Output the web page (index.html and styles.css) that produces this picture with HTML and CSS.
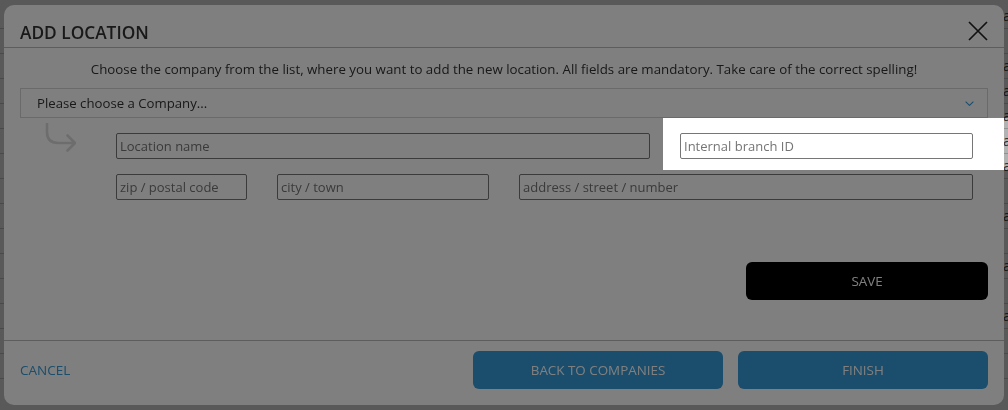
FILE: index.html
```html
<!DOCTYPE html>
<html lang="en">
<head>
<meta charset="utf-8">
<title>Add location</title>
<link rel="stylesheet" href="styles.css">
</head>
<body>
<div class="page">
  <div class="prow"><span class="pcell">a</span><span class="pval">add</span></div>
  <div class="prow"><span class="pcell">b</span><span class="pval">&nbsp;</span></div>
  <div class="prow"><span class="pcell">c</span><span class="pval">add</span></div>
  <div class="prow"><span class="pcell">d</span><span class="pval">add</span></div>
  <div class="prow"><span class="pcell">e</span><span class="pval">add</span></div>
  <div class="prow"><span class="pcell">f</span><span class="pval">add</span></div>
  <div class="prow"><span class="pcell">g</span><span class="pval">add</span></div>
  <div class="prow"><span class="pcell">h</span><span class="pval">&nbsp;</span></div>
  <div class="prow"><span class="pcell">i</span><span class="pval">add</span></div>
  <div class="prow"><span class="pcell">j</span><span class="pval">&nbsp;</span></div>
  <div class="prow"><span class="pcell">k</span><span class="pval">add</span></div>
  <div class="prow"><span class="pcell">l</span><span class="pval">&nbsp;</span></div>
  <div class="prow"><span class="pcell">m</span><span class="pval">add</span></div>
  <div class="prow"><span class="pcell">n</span><span class="pval">&nbsp;</span></div>
  <div class="prow last"><span class="pcell">o</span><span class="pval">&nbsp;</span></div>
  <p class="pnote">location.</p>
</div>

<div class="backdrop"></div>

<div class="modal" role="dialog" aria-labelledby="dlg-title">
  <div class="modal-header">
    <h2 class="title" id="dlg-title">ADD LOCATION</h2>
    <button class="close" aria-label="Close">
      <svg viewBox="0 0 20 20" width="20" height="20"><path d="M1 1 L19 19 M19 1 L1 19" stroke="#222" stroke-width="1.7" fill="none"/></svg>
    </button>
  </div>
  <div class="modal-body">
    <p class="intro">Choose the company from the list, where you want to add the new location. All fields are mandatory. Take care of the correct spelling!</p>
    <div class="select">
      <span>Please choose a Company...</span>
      <svg class="chev" viewBox="0 0 9 5" width="9" height="5"><polyline points="0.6,0.6 4.5,4.4 8.4,0.6" fill="none" stroke="#369ad8" stroke-width="1.1"/></svg>
    </div>
    <div class="fields">
      <svg class="hint-arrow" viewBox="0 0 32 30" width="32" height="30"><path d="M3 0 V9 Q3 20 14 20 H30 M23.5 12.5 L31 20 L23.5 27.5" fill="none" stroke="#dadada" stroke-width="2.6" stroke-linecap="round" stroke-linejoin="round"/></svg>
      <div class="grid">
        <div class="frow">
          <input class="w-name" type="text" placeholder="Location name">
          <input class="w-branch" type="text" placeholder="Internal branch ID">
        </div>
        <div class="frow">
          <input class="w-zip" type="text" placeholder="zip / postal code">
          <input class="w-city" type="text" placeholder="city / town">
          <input class="w-addr" type="text" placeholder="address / street / number">
        </div>
      </div>
    </div>
    <div class="actions">
      <button class="save">SAVE</button>
    </div>
  </div>
  <div class="modal-footer">
    <a class="cancel" href="#">CANCEL</a>
    <div class="footer-buttons">
      <button class="btn-primary">BACK TO COMPANIES</button>
      <button class="btn-primary">FINISH</button>
    </div>
  </div>
</div>

<div class="tour-spot"></div>
</body>
</html>
```

FILE: styles.css
```css
html, body {
  margin: 0;
  width: 1008px;
  height: 410px;
  overflow: hidden;
}

body {
  font-family: "Open Sans", "Noto Sans", sans-serif;
  background: #fff;
  color: #333;
}

/* background page */
.page {
  padding-top: 4px;
}

.prow {
  display: flex;
  height: 25px;
  box-sizing: border-box;
  border-bottom: 1px solid #d0d0d0;
  font-size: 14px;
  line-height: 24px;
}

.pcell {
  width: 1003px;
  flex: none;
  color: transparent;
}

.pval {
  color: #444;
  white-space: nowrap;
}

.pnote {
  margin: 0;
  padding-left: 922px;
  font-size: 15px;
  line-height: 20px;
  color: #111;
}

.backdrop {
  position: fixed;
  inset: 0;
  background: rgba(0, 0, 0, 0.3);
}

/* modal */
.modal {
  position: fixed;
  left: 4px;
  top: 5px;
  width: 1000px;
  height: 400px;
  background: #fff;
  border-radius: 10px;
  display: flex;
  flex-direction: column;
  overflow: hidden;
}

.modal-header {
  height: 43px;
  box-sizing: border-box;
  border-bottom: 1px solid #bbb;
  padding: 16px 16px 0;
  display: flex;
  justify-content: space-between;
  align-items: flex-start;
}

.title {
  margin: 0;
  font-size: 17.3px;
  font-weight: 600;
  line-height: 24px;
  color: #333;
}

.close {
  width: 20px;
  height: 20px;
  padding: 0;
  border: 0;
  background: none;
  display: block;
}

.close svg {
  display: block;
}

.modal-body {
  flex: 1;
  padding: 11px 16px 0;
  display: flex;
  flex-direction: column;
}

.intro {
  margin: 0;
  text-align: center;
  font-size: 13.3px;
  line-height: 20px;
  color: #333;
}

.select {
  margin-top: 9px;
  height: 30px;
  box-sizing: border-box;
  border: 1px solid #d4d4d4;
  display: flex;
  align-items: center;
  justify-content: space-between;
  padding: 0 13px 0 16px;
  font-size: 13.2px;
  color: #333;
}

.chev {
  display: block;
}

.fields {
  display: flex;
  margin-top: 5px;
}

.hint-arrow {
  flex: none;
  margin-left: 24px;
}

.grid {
  margin-left: 40px;
  margin-top: 10px;
  width: 857px;
  display: flex;
  flex-direction: column;
  gap: 15px;
}

.frow {
  display: flex;
  gap: 30px;
}

input {
  height: 26px;
  box-sizing: border-box;
  border: 1px solid #767676;
  border-radius: 2px;
  padding: 0 3px;
  margin: 0;
  font-family: "Open Sans", "Noto Sans", sans-serif;
  font-size: 13px;
  color: #333;
  background: #fff;
}

input::placeholder {
  color: #757575;
}

.w-name { width: 534px; }
.w-branch { width: 293px; }
.w-zip { width: 131px; }
.w-city { width: 212px; }
.w-addr { width: 454px; }

.actions {
  margin-top: 62px;
  display: flex;
  justify-content: flex-end;
}

.save {
  width: 242px;
  height: 38px;
  background: #000;
  color: #fff;
  border: 0;
  border-radius: 6px;
  font-family: "Open Sans", "Noto Sans", sans-serif;
  font-size: 13.4px;
}

.modal-footer {
  height: 65px;
  box-sizing: border-box;
  border-top: 1px solid #bbb;
  padding: 10px 16px 16px;
  display: flex;
  justify-content: space-between;
  align-items: center;
}

.cancel {
  color: #369ad8;
  text-decoration: none;
  font-size: 13.5px;
}

.footer-buttons {
  display: flex;
  gap: 15px;
}

.btn-primary {
  width: 250px;
  height: 38px;
  background: #369ad8;
  color: #fff;
  border: 0;
  border-radius: 6px;
  font-family: "Open Sans", "Noto Sans", sans-serif;
  font-size: 13.4px;
}

/* guided tour highlight */
.tour-spot {
  position: fixed;
  left: 663px;
  top: 118px;
  width: 360px;
  height: 52px;
  box-shadow: 0 0 0 2000px rgba(0, 0, 0, 0.5);
  pointer-events: none;
}
```
